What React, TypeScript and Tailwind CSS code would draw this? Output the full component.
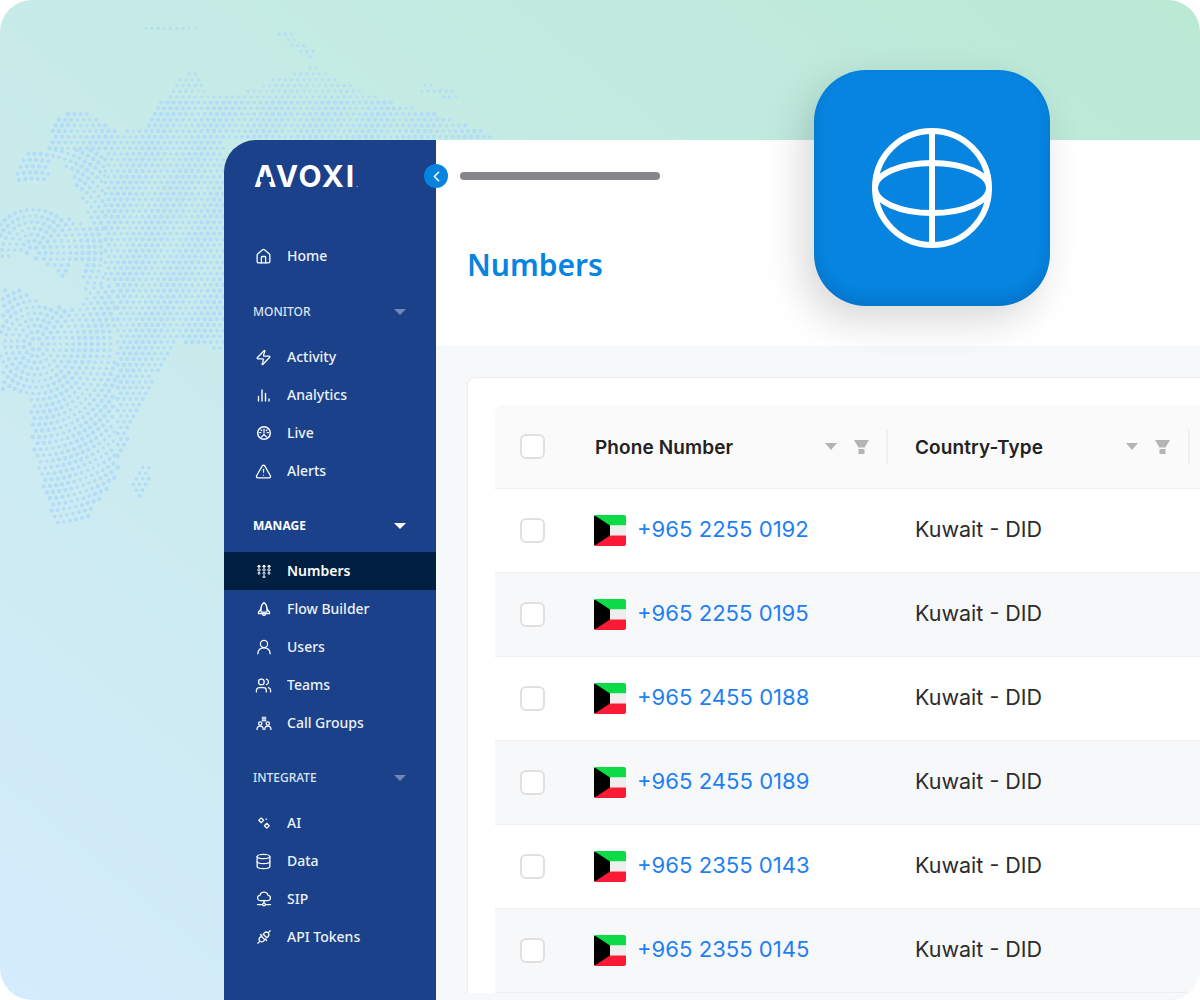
import { useMemo } from "react";
import { ChevronLeft, Database, House, TriangleAlert, Users, Zap } from "lucide-react";
import type { ReactNode } from "react";

type Pt = [number, number];

// outlines traced from an enlarged crop (x at 3x, y at 2.85x), scaled when tested
const MAP_SHAPES: Pt[][] = [
  [[470, 310], [530, 225], [590, 190], [620, 270], [740, 260], [820, 225], [940, 190], [1030, 235], [1180, 295], [1300, 320], [1475, 385], [1475, 400], [670, 400], [670, 1000], [530, 970], [460, 1080], [400, 1200], [340, 1380], [260, 1480], [170, 1500], [130, 1400], [105, 1300], [90, 1180], [80, 1130], [0, 1110], [0, 830], [50, 820], [130, 870], [250, 880], [250, 790], [240, 720], [280, 650], [210, 480], [130, 440], [170, 340], [230, 310], [300, 340], [360, 375], [430, 370]],
  [[0, 620], [100, 590], [180, 610], [280, 650], [240, 720], [190, 800], [130, 750], [70, 720], [0, 740]],
  [[40, 500], [70, 440], [140, 430], [160, 510], [60, 525]],
  [[390, 1400], [430, 1320], [460, 1320], [430, 1420]],
  [[820, 90], [870, 90], [960, 160], [920, 165]],
  [[1260, 240], [1360, 250], [1370, 280], [1260, 270]],
  [[435, 75], [600, 80], [600, 95], [440, 95]],
];

function inside(x: number, y: number, poly: Pt[]) {
  let hit = false;
  for (let i = 0, j = poly.length - 1; i < poly.length; j = i++) {
    const [xi, yi] = poly[i];
    const [xj, yj] = poly[j];
    if (yi > y !== yj > y && x < ((xj - xi) * (y - yi)) / (yj - yi) + xi) hit = !hit;
  }
  return hit;
}

function DotMap() {
  const dots = useMemo(() => {
    const out: { x: number; y: number; r: number }[] = [];
    const add = (x: number, y: number) => {
      if (!MAP_SHAPES.some((s) => inside(x * 3, y * 2.85, s))) return;
      const wave = Math.abs(Math.sin(x * 0.06 + y * 0.035));
      const fade = y < 100 ? 0.72 : 1;
      out.push({ x, y, r: (1.6 + 0.65 * wave) * fade });
    };
    const rings = (cx: number, cy: number, keep: (x: number, y: number) => boolean) => {
      for (let ring = 1; ring < 36; ring++) {
        const radius = ring * 6.2;
        const count = Math.round((Math.PI * 2 * radius) / 6.2);
        for (let k = 0; k < count; k++) {
          const a = (k / count) * Math.PI * 2;
          const x = cx + Math.cos(a) * radius;
          const y = cy + Math.sin(a) * radius;
          if (keep(x, y)) add(x, y);
        }
      }
    };
    rings(33, 253, (x, y) => x < 105 && y >= 150 && y < 285);
    rings(36, 344, (x, y) => x < 115 && y >= 285 && y < 540);
    for (let row = 0; row < 100; row++) {
      for (let col = 0; col < 90; col++) {
        const x = col * 6.2 + (row % 2 ? 3.1 : 0);
        const y = row * 5.7;
        const leftZone = x < 105 && y >= 150 && y < 285;
        const lowZone = x < 115 && y >= 285;
        if (!leftZone && !lowZone && x < 500) add(x, y);
      }
    }
    return out;
  }, []);

  return (
    <svg className="absolute left-0 top-0" width={500} height={560} viewBox="0 0 500 560">
      {dots.map((d, i) => (
        <circle key={i} cx={d.x} cy={d.y} r={d.r} fill="#b2dcf7" />
      ))}
    </svg>
  );
}

function IconSvg({ children }: { children: ReactNode }) {
  return (
    <svg width={16} height={16} viewBox="0 0 16 16" fill="none" stroke="currentColor" strokeWidth={1.25} strokeLinecap="round" strokeLinejoin="round">
      {children}
    </svg>
  );
}

const AnalyticsIcon = () => (
  <IconSvg>
    <path d="M2.5 14V9.5M6 14V3M9.5 14V6.5M13 14v-2" strokeWidth={1.4} />
  </IconSvg>
);
const LiveIcon = () => (
  <IconSvg>
    <circle cx="8" cy="8" r="6.3" strokeWidth={1.5} />
    <path d="M8 4v4M3.6 7.5h1.3M11.1 7.5h1.3M5 4.8l.8.8M11 4.8l-.8.8M5 12.4 8 9.5l3 2.9" />
  </IconSvg>
);
const KeypadIcon = () => (
  <svg width={16} height={16} viewBox="0 0 16 16" fill="currentColor">
    <circle cx="3" cy="3.2" r="1.5" />
    <circle cx="8" cy="3.2" r="1.5" />
    <circle cx="13" cy="3.2" r="1.5" />
    <g fill="none" stroke="currentColor" strokeWidth={1}>
      <circle cx="3" cy="6.9" r="1.2" />
      <circle cx="8" cy="6.9" r="1.2" />
      <circle cx="13" cy="6.9" r="1.2" />
      <circle cx="3" cy="10.3" r="1" />
      <circle cx="8" cy="10.3" r="1" />
      <circle cx="13" cy="10.3" r="1" />
      <circle cx="8" cy="13.7" r="1" />
    </g>
  </svg>
);
const RocketIcon = () => (
  <IconSvg>
    <path d="M8 1.5c2 1.4 3 3.5 3 6v3.5H5V7.5c0-2.5 1-4.6 3-6Z" />
    <path d="M5 8 2.5 11v1.6H13.5V11L11 8M6.5 12.6c0 1.2.6 2 1.5 2s1.5-.8 1.5-2" />
  </IconSvg>
);
const UserIcon = () => (
  <IconSvg>
    <circle cx="8" cy="5" r="3.6" />
    <path d="M1.8 14.800c.3-3.600 2.800-5.900 6.200-5.900s5.900 2.300 6.200 5.900" />
  </IconSvg>
);
const CallGroupsIcon = () => (
  <IconSvg>
    <circle cx="4.200" cy="8.500" r="1.700" />
    <circle cx="11.800" cy="8.500" r="1.700" />
    <path d="M1 14.500c0-2 1.300-3.400 3.200-3.400s3 1.400 3 3.400M8.800 14.500c0-2 1.100-3.400 3-3.400s3.200 1.400 3.200 3.400" />
    <path d="M6 3h4M6 5.200h4M7 1.800v4.600M9 1.800v4.600" strokeWidth={1} />
  </IconSvg>
);
const AiIcon = () => (
  <IconSvg>
    <path d="m5.200 2.900 2.400 2.400-2.400 2.400-2.400-2.400ZM10.800 8.300l2.400 2.400-2.400 2.400-2.400-2.400Z" />
    <path d="M10 4.200h.6" />
  </IconSvg>
);
const SipIcon = () => (
  <IconSvg>
    <path d="M5 9.500H4.300a2.600 2.600 0 0 1-.3-5.200 4.100 4.100 0 0 1 8 0 2.600 2.600 0 0 1-.3 5.200H5Z" />
    <path d="M8 9.500V12M1.500 13.500h5M9.500 13.500h5" />
    <circle cx="8" cy="13.500" r="1.300" />
  </IconSvg>
);
const TokenIcon = () => (
  <IconSvg>
    <path d="m5.200 7.200 3.600 3.600-1.300 1.300a2.500 2.500 0 0 1-3.600-3.600ZM10.800 8.800 7.200 5.200l1.300-1.300a2.500 2.500 0 0 1 3.600 3.600ZM1.800 14.200l2.100-2.100M12.100 3.900l2.100-2.100M4.500 5.500 6 7M9.300 10l1.300 1.500" />
  </IconSvg>
);

function NavItem({ icon, label, active }: { icon: ReactNode; label: string; active?: boolean }) {
  return (
    <div className={`flex h-[38px] items-center pl-[32px] text-[14px] ${active ? "bg-[#011f41] font-semibold text-white" : "font-medium text-[#eef2f8]"}`}>
      <span className="flex w-[31px] shrink-0 text-white">{icon}</span>
      <span className="mb-[2px]">{label}</span>
    </div>
  );
}

function NavHeader({ label, active }: { label: string; active?: boolean }) {
  return (
    <div className={`mb-[14px] flex h-[24px] items-center justify-between pl-[29px] pr-[30px] text-[12px] ${active ? "font-bold text-white" : "font-medium text-[#dce4f1]"}`}>
      {label}
      <span className={`h-0 w-0 border-x-[6px] border-t-[6px] border-x-transparent ${active ? "border-t-white" : "border-t-[#7387b6]"}`} />
    </div>
  );
}

function Sidebar() {
  const ic = { size: 17, strokeWidth: 1.8, className: "-ml-[1px]" };
  return (
    <aside className="h-[860px] w-[212px] shrink-0 rounded-tl-[32px] bg-[#1a4189] font-['Noto_Sans',sans-serif]">
      <div className="flex h-[97px] items-start pl-[30px] pt-[16px]">
        <div className="relative font-['Inter',sans-serif] text-[30px] font-bold leading-[40px] tracking-[1.7px] text-white">
          AVOXI
          <span className="text-[9px] font-normal text-[#a9b6d2]">.</span>
          <span className="absolute left-[6px] top-[21px] h-[5px] w-[11px] bg-[#1a4189]" />
        </div>
      </div>
      <NavItem icon={<House {...ic} />} label="Home" />
      <div className="mt-[25px]">
        <NavHeader label="MONITOR" />
      </div>
      <NavItem icon={<Zap {...ic} />} label="Activity" />
      <NavItem icon={<AnalyticsIcon />} label="Analytics" />
      <NavItem icon={<LiveIcon />} label="Live" />
      <NavItem icon={<TriangleAlert {...ic} />} label="Alerts" />
      <div className="mt-[24px]">
        <NavHeader label="MANAGE" active />
      </div>
      <NavItem icon={<KeypadIcon />} label="Numbers" active />
      <NavItem icon={<RocketIcon />} label="Flow Builder" />
      <NavItem icon={<UserIcon />} label="Users" />
      <NavItem icon={<Users {...ic} />} label="Teams" />
      <NavItem icon={<CallGroupsIcon />} label="Call Groups" />
      <div className="mt-[24px]">
        <NavHeader label="INTEGRATE" />
      </div>
      <NavItem icon={<AiIcon />} label="AI" />
      <NavItem icon={<Database {...ic} />} label="Data" />
      <NavItem icon={<SipIcon />} label="SIP" />
      <NavItem icon={<TokenIcon />} label="API Tokens" />
    </aside>
  );
}

function Flag() {
  return (
    <svg width={32} height={31} viewBox="0 0 32 31" className="mt-[2px] shrink-0 rounded-[2px]">
      <rect width="32" height="10.500" fill="#0adb47" />
      <rect y="10.500" width="32" height="10" fill="#eeeeee" />
      <rect y="20.500" width="32" height="10.500" fill="#f91a35" />
      <path d="M0 0 16 10.500v10L0 31Z" fill="#000" />
    </svg>
  );
}

function Checkbox() {
  return <span className="h-[25px] w-[25px] rounded-[6px] border-2 border-[#e0e0e0] bg-white" />;
}

function Funnel() {
  return (
    <svg width={15} height={14} viewBox="0 0 15 14" fill="#b4b4b4">
      <path d="M0 0h15l-4.500 7.500h-6Z" />
      <rect x="4.500" y="9" width="6" height="5" />
    </svg>
  );
}

function HeaderCell({ label, className }: { label: string; className: string }) {
  return (
    <div className={`flex h-[34px] items-center border-r-2 border-[#f0f0f0] ${className}`}>
      <span className="mt-[3px] flex-1 text-[19px] font-semibold tracking-[0.1px] text-[#222222]">{label}</span>
      <span className="mr-[17px] h-0 w-0 border-x-[6.5px] border-t-[7px] border-x-transparent border-t-[#b4b4b4]" />
      <Funnel />
    </div>
  );
}

const ROWS = ["+965 2255 0192", "+965 2255 0195", "+965 2455 0188", "+965 2455 0189", "+965 2355 0143", "+965 2355 0145"];

function NumbersTable() {
  return (
    <div className="font-['Inter',sans-serif]">
      <div className="grid h-[84px] grid-cols-[100px_293px_302px] items-center rounded-tl-lg border-b border-[#eeeeee] bg-[#fafafa]">
        <div className="flex pl-[25px]">
          <Checkbox />
        </div>
        <HeaderCell label="Phone Number" className="pr-[17px]" />
        <HeaderCell label="Country-Type" className="pl-[27px] pr-[18px]" />
      </div>
      {ROWS.map((phone, i) => (
        <div key={phone} className={`grid h-[84px] grid-cols-[99px_321px_1fr] items-center border-b border-[#eeeeee] ${i % 2 ? "bg-[#f7f8fa]" : "bg-white"}`}>
          <div className="flex pl-[25px]">
            <Checkbox />
          </div>
          <div className="mb-[2px] flex items-center gap-[11px]">
            <Flag />
            <span className="text-[22.1px] text-[#1f7ff2]">{phone}</span>
          </div>
          <span className="mb-[2px] text-[21.5px] text-[#2c2c2c]">Kuwait - DID</span>
        </div>
      ))}
    </div>
  );
}

export default function App() {
  return (
    <div className="relative h-[1000px] w-[1200px] overflow-hidden rounded-[32px] bg-linear-to-bl from-[#bae9d4] to-[#d4ecfd] pl-[224px] pt-[140px]">
      <DotMap />
      <div className="relative flex">
        <Sidebar />
        <main className="h-[860px] flex-1 overflow-hidden bg-[#f7f8fa]">
          <div className="h-[206px] bg-white pl-[24px] pt-[32px]">
            <div className="h-[8px] w-[200px] rounded-full bg-[#85868a]" />
            <h1 className="ml-[7px] mt-[65px] font-['Noto_Sans',sans-serif] text-[30px] font-semibold leading-[40px] text-[#0684df]">Numbers</h1>
          </div>
          <div className="ml-[31px] mt-[31px] rounded-tl-lg border-l border-t border-[#eceef1] bg-white pl-[27px] pt-[27px]">
            <NumbersTable />
          </div>
        </main>
        <span className="absolute left-[200px] top-[24px] flex h-[24px] w-[24px] items-center justify-center rounded-full bg-[#0684df] text-white">
          <ChevronLeft size={17} strokeWidth={2.2} />
        </span>
      </div>
      <div className="absolute left-[814px] top-[70px] flex h-[236px] w-[236px] items-center justify-center rounded-[52px] bg-[#0684df] shadow-[-10px_14px_40px_rgba(0,0,0,0.16),inset_0_-8px_12px_rgba(0,60,130,0.2)]">
        <svg width={120} height={120} viewBox="0 0 120 120" fill="none" stroke="white" strokeWidth={6}>
          <circle cx="60" cy="60" r="57" />
          <ellipse cx="60" cy="60" rx="57" ry="25" />
          <path d="M60 3v114" />
        </svg>
      </div>
    </div>
  );
}
